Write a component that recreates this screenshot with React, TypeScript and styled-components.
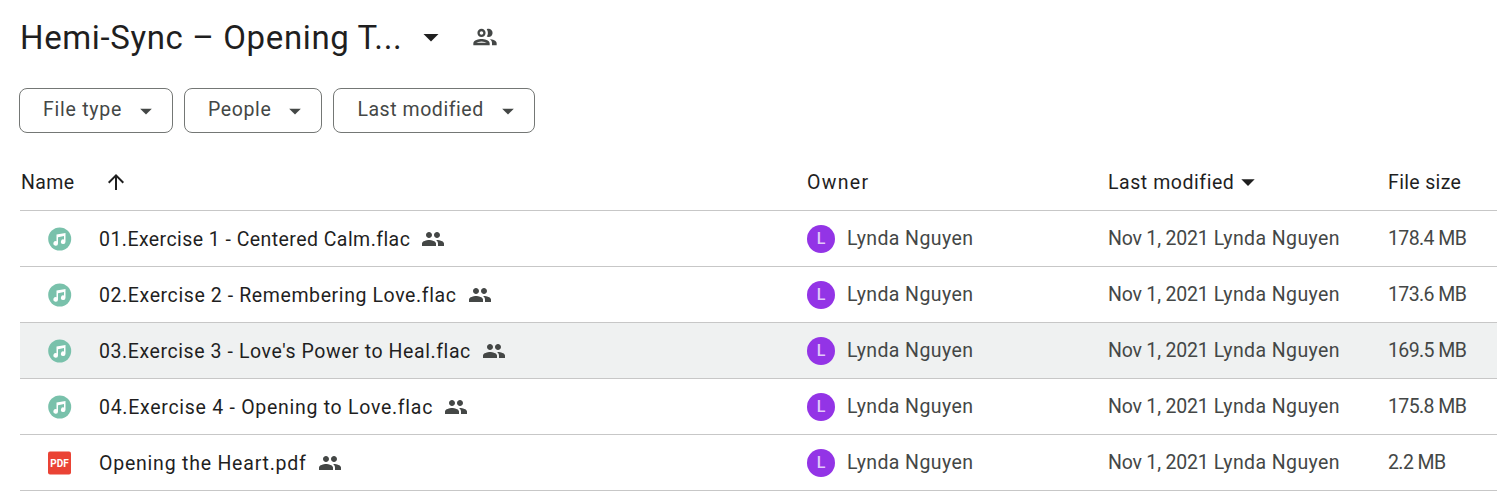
import React from "react";
import styled, { createGlobalStyle } from "styled-components";

const Global = createGlobalStyle`
  html, body { margin: 0; padding: 0; background: #fff; overflow: hidden; }
  body { font-family: Roboto, "Liberation Sans", sans-serif; }
`;

const Page = styled.div`
  width: 1497px;
  height: 503px;
  padding-left: 20px;
  box-sizing: border-box;
`;

const TitleRow = styled.div`
  display: flex;
  align-items: center;
  height: 74px;
`;

const Title = styled.h1`
  margin: 0;
  font-size: 33px;
  font-weight: 400;
  color: #1f1f1f;
  letter-spacing: 0.62px;
  width: 393px;
  white-space: nowrap;
`;

const TitleCaret = styled.svg`
  width: 36px;
  height: 36px;
  fill: #1f1f1f;
  flex: none;
`;

const SharedIcon = styled.svg`
  width: 28px;
  height: 28px;
  margin-left: 22px;
  fill: #444746;
  flex: none;
`;

const Filters = styled.div`
  display: flex;
  gap: 11px;
  margin: 14px 0 0 -1px;
`;

const Chip = styled.div<{ $track: number }>`
  display: flex;
  align-items: center;
  height: 45px;
  box-sizing: border-box;
  border: 1px solid #747775;
  border-radius: 8px;
  padding: 0 12px 2px 23px;
  font-size: 19.5px;
  letter-spacing: ${(p) => p.$track}px;
  color: #444746;
`;

const ChipCaret = styled.svg`
  width: 28px;
  height: 28px;
  margin: 2px 0 0 10px;
  fill: #444746;
`;

const HeaderRow = styled.div`
  display: grid;
  grid-template-columns: 787px 301px 280px 1fr;
  align-items: center;
  height: 78px;
  margin-top: -1px;
  padding-top: 21px;
  box-sizing: border-box;
  font-size: 19.5px;
  color: #1f1f1f;
  font-weight: 400;
`;

const HeaderCell = styled.div<{ $pad?: number; $track: number }>`
  display: flex;
  align-items: center;
  height: 24px;
  padding-left: ${(p) => p.$pad ?? 0}px;
  letter-spacing: ${(p) => p.$track}px;
  white-space: nowrap;
`;

const HeaderLabel = styled.span`
  padding-top: 2px;
`;

const UpArrow = styled.svg`
  width: 24px;
  height: 24px;
  margin-left: 29px;
  fill: #1f1f1f;
`;

const DownCaret = styled.svg`
  width: 32px;
  height: 32px;
  margin-left: -2px;
  fill: #1f1f1f;
  flex: none;
`;

const Row = styled.div<{ $active?: boolean }>`
  display: grid;
  grid-template-columns: 787px 301px 280px 1fr;
  align-items: center;
  height: 56px;
  box-sizing: border-box;
  border-top: 1px solid #c7c7c7;
  background: ${(p) => (p.$active ? "#eff1f1" : "transparent")};
  &:last-child { border-bottom: 1px solid #c7c7c7; height: 57px; }
`;

const NameCell = styled.div`
  display: flex;
  align-items: center;
  padding-left: 28px;
  color: #1f1f1f;
  white-space: nowrap;
`;

const NameText = styled.span<{ $track: number }>`
  font-size: 19.5px;
  letter-spacing: ${(p) => p.$track}px;
  padding-top: 2px;
`;

const FileIcon = styled.svg`
  width: 24px;
  height: 24px;
  margin-right: 27px;
  flex: none;
`;

const PeopleIcon = styled.svg`
  width: 24px;
  height: 24px;
  margin-left: 11px;
  fill: #444746;
`;

const OwnerCell = styled.div`
  display: flex;
  align-items: center;
  font-size: 19.5px;
  letter-spacing: 0.4px;
  color: #444746;
  white-space: nowrap;
`;

const Avatar = styled.div`
  width: 28px;
  height: 28px;
  border-radius: 50%;
  background: #9334e6;
  color: #e2c8fa;
  font-size: 16px;
  font-weight: 500;
  letter-spacing: 0;
  display: flex;
  align-items: center;
  justify-content: center;
  margin-right: 12px;
`;

const ModifiedCell = styled.div`
  font-size: 19.5px;
  letter-spacing: 0.4px;
  color: #444746;
  white-space: nowrap;
`;

const DateText = styled.span`
  letter-spacing: -0.2px;
`;

const SizeCell = styled.div`
  font-size: 19.5px;
  letter-spacing: -0.6px;
  color: #444746;
  white-space: nowrap;
`;

const Caret = () => <path d="M7 10l5 5 5-5z" />;

const People = () => (
  <PeopleIcon viewBox="0 0 24 24">
    <path d="M16 11c1.66 0 2.99-1.34 2.99-3S17.66 5 16 5s-3 1.34-3 3 1.34 3 3 3zm-8 0c1.66 0 2.99-1.34 2.99-3S9.66 5 8 5 5 6.34 5 8s1.34 3 3 3zm0 2c-2.33 0-7 1.17-7 3.5V19h14v-2.5C15 14.17 10.33 13 8 13zm8 0c-.29 0-.62.02-.97.05 1.16.84 1.97 1.97 1.97 3.45V19h6v-2.5c0-2.33-4.67-3.5-7-3.5z" />
  </PeopleIcon>
);

const AudioIcon = () => (
  <FileIcon viewBox="0 0 24 24">
    <circle cx="11.7" cy="12" r="11.5" fill="#79c1ab" />
    <path
      fill="#fff"
      d="M17.5 6v8.7a2.3 2.3 0 1 1-1.5-2.15V8.9l-6 1.3v6.2a2.3 2.3 0 1 1-1.5-2.15V7.4z"
    />
  </FileIcon>
);

const PdfIcon = () => (
  <FileIcon viewBox="0 0 24 24">
    <rect x="0" y="0.5" width="23" height="23" rx="2" fill="#ea4335" />
    <text x="11.5" y="15.8" textAnchor="middle" fontSize="10" fontWeight="700" fill="#fff" fontFamily="Roboto, sans-serif">
      PDF
    </text>
  </FileIcon>
);

const files = [
  { name: "01.Exercise 1 - Centered Calm.flac", size: "178.4 MB", kind: "audio", track: 0.44 },
  { name: "02.Exercise 2 - Remembering Love.flac", size: "173.6 MB", kind: "audio", track: 0.6 },
  { name: "03.Exercise 3 - Love's Power to Heal.flac", size: "169.5 MB", kind: "audio", active: true, track: 0.58 },
  { name: "04.Exercise 4 - Opening to Love.flac", size: "175.8 MB", kind: "audio", track: 0.72 },
  { name: "Opening the Heart.pdf", size: "2.2 MB", kind: "pdf", track: 0.78 },
];

const chips = [
  { label: "File type", track: 0.75 },
  { label: "People", track: 0.6 },
  { label: "Last modified", track: 0.55 },
];

export default function App() {
  return (
    <Page>
      <Global />
      <TitleRow>
        <Title>Hemi-Sync – Opening T...</Title>
        <TitleCaret viewBox="0 0 24 24"><Caret /></TitleCaret>
        <SharedIcon viewBox="0 0 24 24">
          <path d="M9 13.75c-2.34 0-7 1.17-7 3.5V19h14v-1.75c0-2.33-4.66-3.5-7-3.5zM4.34 17c.84-.58 2.87-1.25 4.66-1.25s3.82.67 4.66 1.25H4.34zM9 12c1.93 0 3.5-1.57 3.5-3.5S10.93 5 9 5 5.5 6.57 5.5 8.5 7.07 12 9 12zm0-5c.83 0 1.5.67 1.5 1.5S9.83 10 9 10s-1.5-.67-1.5-1.5S8.17 7 9 7zm7.04 6.81c1.16.84 1.96 1.96 1.96 3.44V19h4v-1.75c0-2.02-3.5-3.17-5.96-3.44zM15 12c1.93 0 3.5-1.57 3.5-3.5S16.93 5 15 5c-.54 0-1.04.13-1.5.35.63.89 1 1.98 1 3.15s-.37 2.26-1 3.15c.46.22.96.35 1.5.35z" />
        </SharedIcon>
      </TitleRow>
      <Filters>
        {chips.map((c) => (
          <Chip key={c.label} $track={c.track}>
            {c.label}
            <ChipCaret viewBox="0 0 24 24"><Caret /></ChipCaret>
          </Chip>
        ))}
      </Filters>
      <HeaderRow>
        <HeaderCell $pad={1} $track={0.4}>
          <HeaderLabel>Name</HeaderLabel>
          <UpArrow viewBox="0 0 24 24">
            <path d="M4 12l1.41 1.41L11 7.83V20h2V7.83l5.58 5.59L20 12l-8-8-8 8z" />
          </UpArrow>
        </HeaderCell>
        <HeaderCell $track={1.3}>
          <HeaderLabel>Owner</HeaderLabel>
        </HeaderCell>
        <HeaderCell $track={0.55}>
          <HeaderLabel>Last modified</HeaderLabel>
          <DownCaret viewBox="0 0 24 24"><Caret /></DownCaret>
        </HeaderCell>
        <HeaderCell $track={0.35}>
          <HeaderLabel>File size</HeaderLabel>
        </HeaderCell>
      </HeaderRow>
      {files.map((f) => (
        <Row key={f.name} $active={f.active}>
          <NameCell>
            {f.kind === "pdf" ? <PdfIcon /> : <AudioIcon />}
            <NameText $track={f.track}>{f.name}</NameText>
            <People />
          </NameCell>
          <OwnerCell>
            <Avatar>L</Avatar>
            Lynda Nguyen
          </OwnerCell>
          <ModifiedCell>
            <DateText>Nov 1, 2021</DateText> Lynda Nguyen
          </ModifiedCell>
          <SizeCell>{f.size}</SizeCell>
        </Row>
      ))}
    </Page>
  );
}
